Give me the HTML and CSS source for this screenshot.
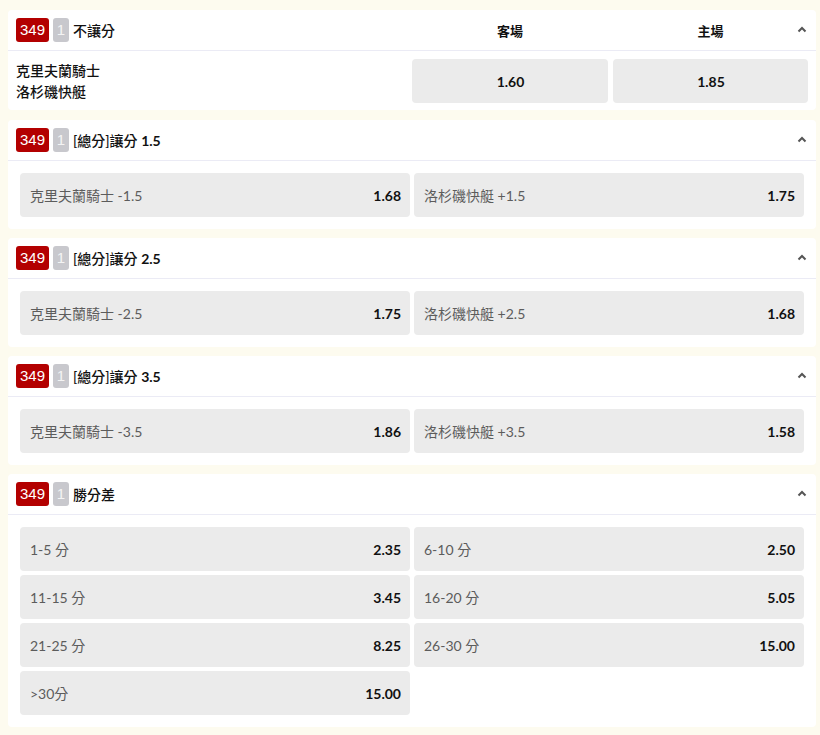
FILE: index.html
```html
<!DOCTYPE html>
<html lang="zh-Hant">
<head>
<meta charset="utf-8">
<link rel="stylesheet" href="styles.css">
</head>
<body>
<div class="page">
  <section class="card card-first">
    <div class="head head-grid">
      <div class="title"><span class="b-red">349</span><span class="b-grey">1</span><span class="t">不讓分</span></div>
      <div class="col-label">客場</div>
      <div class="col-label">主場</div>
      <svg class="chev" width="10" height="7" viewBox="0 0 10 7"><path d="M1.5 5.5 L5 2 L8.5 5.5" fill="none" stroke="#555" stroke-width="2"/></svg>
    </div>
    <div class="body1">
      <div class="teams"><div>克里夫蘭騎士</div><div>洛杉磯快艇</div></div>
      <div class="btn center"><span class="odd">1.60</span></div>
      <div class="btn center"><span class="odd">1.85</span></div>
    </div>
  </section>

  <section class="card">
    <div class="head">
      <div class="title"><span class="b-red">349</span><span class="b-grey">1</span><span class="t">[總分]讓分 <b class="num">1.5</b></span></div>
      <svg class="chev" width="10" height="7" viewBox="0 0 10 7"><path d="M1.5 5.5 L5 2 L8.5 5.5" fill="none" stroke="#555" stroke-width="2"/></svg>
    </div>
    <div class="grid2">
      <div class="btn"><span class="lbl">克里夫蘭騎士 -1.5</span><span class="odd">1.68</span></div>
      <div class="btn"><span class="lbl">洛杉磯快艇 +1.5</span><span class="odd">1.75</span></div>
    </div>
  </section>

  <section class="card">
    <div class="head">
      <div class="title"><span class="b-red">349</span><span class="b-grey">1</span><span class="t">[總分]讓分 <b class="num">2.5</b></span></div>
      <svg class="chev" width="10" height="7" viewBox="0 0 10 7"><path d="M1.5 5.5 L5 2 L8.5 5.5" fill="none" stroke="#555" stroke-width="2"/></svg>
    </div>
    <div class="grid2">
      <div class="btn"><span class="lbl">克里夫蘭騎士 -2.5</span><span class="odd">1.75</span></div>
      <div class="btn"><span class="lbl">洛杉磯快艇 +2.5</span><span class="odd">1.68</span></div>
    </div>
  </section>

  <section class="card">
    <div class="head">
      <div class="title"><span class="b-red">349</span><span class="b-grey">1</span><span class="t">[總分]讓分 <b class="num">3.5</b></span></div>
      <svg class="chev" width="10" height="7" viewBox="0 0 10 7"><path d="M1.5 5.5 L5 2 L8.5 5.5" fill="none" stroke="#555" stroke-width="2"/></svg>
    </div>
    <div class="grid2">
      <div class="btn"><span class="lbl">克里夫蘭騎士 -3.5</span><span class="odd">1.86</span></div>
      <div class="btn"><span class="lbl">洛杉磯快艇 +3.5</span><span class="odd">1.58</span></div>
    </div>
  </section>

  <section class="card">
    <div class="head">
      <div class="title"><span class="b-red">349</span><span class="b-grey">1</span><span class="t">勝分差</span></div>
      <svg class="chev" width="10" height="7" viewBox="0 0 10 7"><path d="M1.5 5.5 L5 2 L8.5 5.5" fill="none" stroke="#555" stroke-width="2"/></svg>
    </div>
    <div class="grid2">
      <div class="btn"><span class="lbl">1-5 分</span><span class="odd">2.35</span></div>
      <div class="btn"><span class="lbl">6-10 分</span><span class="odd">2.50</span></div>
      <div class="btn"><span class="lbl">11-15 分</span><span class="odd">3.45</span></div>
      <div class="btn"><span class="lbl">16-20 分</span><span class="odd">5.05</span></div>
      <div class="btn"><span class="lbl">21-25 分</span><span class="odd">8.25</span></div>
      <div class="btn"><span class="lbl">26-30 分</span><span class="odd">15.00</span></div>
      <div class="btn"><span class="lbl">&gt;30分</span><span class="odd">15.00</span></div>
    </div>
  </section>
</div>
</body>
</html>
```

FILE: styles.css
```css
html, body {
  margin: 0;
  padding: 0;
  background: #fdfbef;
}
body {
  font-family: Lato, "Noto Sans CJK TC", sans-serif;
  font-size: 14px;
  color: #111;
}
.page {
  width: 808px;
  padding: 10px 0 0 8px;
  display: flex;
  flex-direction: column;
  gap: 9px;
}
.card {
  background: #fff;
  border-radius: 4px;
}
.card-first {
  margin-bottom: 1px;
}
.head {
  position: relative;
  height: 40px;
  border-bottom: 1px solid #ebebf5;
  display: flex;
  align-items: center;
  padding: 0 8px;
}
.head-grid {
  display: grid;
  grid-template-columns: 1fr 196px 195px;
  column-gap: 5px;
}
.title {
  display: flex;
  align-items: center;
}
.b-red {
  display: inline-block;
  background: #b30000;
  color: #fff;
  border-radius: 3px;
  height: 24px;
  line-height: 24px;
  width: 33px;
  text-align: center;
  font-family: "Liberation Sans", Arial, sans-serif;
  font-size: 15px;
}
.b-grey {
  display: inline-block;
  background: #c8c8cd;
  color: #f4f4f4;
  border-radius: 3px;
  height: 24px;
  line-height: 24px;
  width: 16px;
  margin-left: 4px;
  text-align: center;
  font-family: "Liberation Sans", Arial, sans-serif;
  font-size: 15px;
}
.t {
  margin-left: 4px;
  font-weight: 500;
  font-size: 14px;
}
.num {
  font-weight: 700;
}
.col-label {
  text-align: center;
  font-weight: 700;
  font-size: 13px;
}
.chev {
  position: absolute;
  right: 9px;
  top: 16px;
}
.body1 {
  display: grid;
  grid-template-columns: 1fr 196px 195px;
  column-gap: 5px;
  padding: 8px 8px 7px 8px;
  align-items: center;
}
.teams {
  font-weight: 500;
  line-height: 21px;
  font-size: 14px;
}
.btn {
  height: 44px;
  background: #ebebeb;
  border-radius: 4px;
  display: flex;
  align-items: center;
  justify-content: space-between;
  padding: 0 9px 0 10px;
}
.btn.center {
  justify-content: center;
}
.grid2 {
  display: grid;
  grid-template-columns: 1fr 1fr;
  gap: 4px;
  padding: 12px;
}
.lbl {
  color: #5c5c5c;
  font-size: 14px;
}
.odd {
  font-weight: 700;
  color: #111;
  font-size: 14px;
}
```
